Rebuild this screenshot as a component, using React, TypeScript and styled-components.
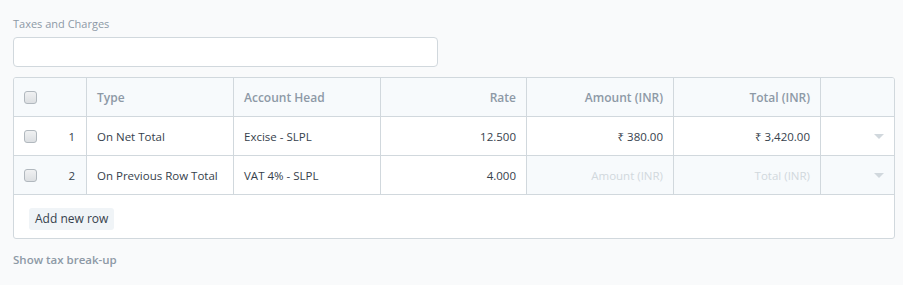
import React from "react";
import styled, { createGlobalStyle } from "styled-components";

const GlobalStyle = createGlobalStyle`
  html, body {
    margin: 0;
    padding: 0;
    background: #f9fafb;
    font-family: "Open Sans", "Noto Sans", sans-serif;
  }
`;

const Page = styled.div`
  padding: 16px 8px 0 13px;
  width: 882px;
`;

const Label = styled.div`
  font-size: 11px;
  color: #8d99a6;
  line-height: 16px;
  margin-bottom: 5px;
`;

const TextInput = styled.div`
  width: 423px;
  height: 28px;
  background: #fff;
  border: 1px solid #d1d8dd;
  border-radius: 4px;
  margin-bottom: 10px;
`;

const Grid = styled.div`
  border: 1px solid #d1d8dd;
  border-radius: 3px;
  background: #fff;
  overflow: hidden;
`;

const Row = styled.div<{ $head?: boolean }>`
  display: grid;
  grid-template-columns: 73px 147px 147px 146px 147px 147px 1fr;
  height: 38px;
  border-bottom: 1px solid #d1d8dd;
  background: ${(p) => (p.$head ? "#f7fafc" : "#fff")};
`;

const Cell = styled.div<{ $right?: boolean; $muted?: boolean; $bold?: boolean; $ph?: boolean }>`
  display: flex;
  align-items: center;
  justify-content: ${(p) => (p.$right ? "flex-end" : "flex-start")};
  padding: 0 10px;
  border-right: 1px solid #d1d8dd;
  font-size: ${(p) => (p.$bold ? "12px" : "11.5px")};
  color: ${(p) => (p.$ph ? "#d1d8dd" : p.$bold ? "#8d99a6" : "#36414c")};
  font-weight: ${(p) => (p.$bold ? 600 : 400)};
  background: ${(p) => (p.$muted ? "#f7fafc" : "transparent")};
  &:last-child {
    border-right: none;
  }
`;

const IdxCell = styled(Cell)`
  justify-content: space-between;
  padding: 0 11px 0 10px;
`;

const Check = styled.span`
  display: inline-block;
  width: 11px;
  height: 11px;
  border: 1px solid #b1b8be;
  border-radius: 3px;
  background: linear-gradient(#f0f1f2, #dcdfe2);
`;

const Caret = styled.span`
  margin-left: auto;
  width: 0;
  height: 0;
  border-left: 5px solid transparent;
  border-right: 5px solid transparent;
  border-top: 5px solid #d1d8dd;
`;

const Footer = styled.div`
  padding: 11px 15px 9px;
  height: 23px;
`;

const AddButton = styled.button`
  font-family: inherit;
  font-size: 12px;
  color: #36414c;
  background: #f0f4f7;
  border: none;
  border-radius: 3px;
  height: 22px;
  padding: 0 6px;
`;

const Link = styled.div`
  margin-top: 13px;
  font-size: 11.5px;
  font-weight: 600;
  color: #8d99a6;
`;

type TaxRow = {
  idx: number;
  type: string;
  head: string;
  rate: string;
  amount?: string;
  total?: string;
};

const rows: TaxRow[] = [
  { idx: 1, type: "On Net Total", head: "Excise - SLPL", rate: "12.500", amount: "₹ 380.00", total: "₹ 3,420.00" },
  { idx: 2, type: "On Previous Row Total", head: "VAT 4% - SLPL", rate: "4.000" },
];

export default function App() {
  return (
    <Page>
      <GlobalStyle />
      <Label>Taxes and Charges</Label>
      <TextInput />
      <Grid>
        <Row $head>
          <IdxCell>
            <Check />
          </IdxCell>
          <Cell $bold>Type</Cell>
          <Cell $bold>Account Head</Cell>
          <Cell $bold $right>Rate</Cell>
          <Cell $bold $right>Amount (INR)</Cell>
          <Cell $bold $right>Total (INR)</Cell>
          <Cell />
        </Row>
        {rows.map((r) => {
          const ro = !r.amount;
          return (
            <Row key={r.idx}>
              <IdxCell $muted={ro}>
                <Check />
                <span>{r.idx}</span>
              </IdxCell>
              <Cell>{r.type}</Cell>
              <Cell>{r.head}</Cell>
              <Cell $right>{r.rate}</Cell>
              <Cell $right $muted={ro} $ph={ro}>{r.amount ?? "Amount (INR)"}</Cell>
              <Cell $right $muted={ro} $ph={ro}>{r.total ?? "Total (INR)"}</Cell>
              <Cell $muted={ro}>
                <Caret />
              </Cell>
            </Row>
          );
        })}
        <Footer>
          <AddButton>Add new row</AddButton>
        </Footer>
      </Grid>
      <Link>Show tax break-up</Link>
    </Page>
  );
}
